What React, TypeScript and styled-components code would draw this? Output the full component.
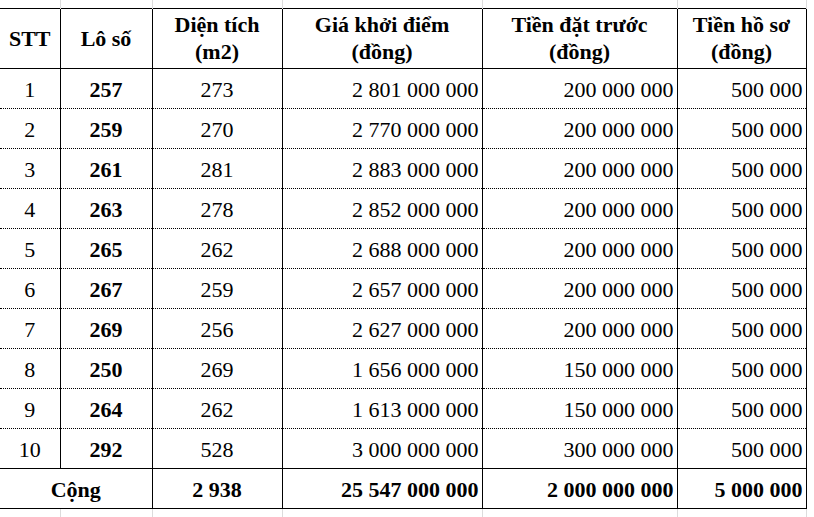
import React from 'react'
import styled, { createGlobalStyle } from 'styled-components'

const GlobalStyle = createGlobalStyle`
  html, body {
    margin: 0;
    padding: 0;
    background: #ffffff;
  }
  body {
    font-family: 'Liberation Serif', 'Times New Roman', serif;
    color: #000000;
  }
`

const COLS = [60, 92, 130, 200, 195, 129]

const Sheet = styled.table`
  border-collapse: collapse;
  table-layout: fixed;
  width: 806px;
  font-size: 22px;
  line-height: 27px;
`

const GridRow = styled.tr<{ $h: number }>`
  height: ${(p) => p.$h}px;
`

const GridCell = styled.td`
  padding: 0;
  border-right: 1px solid #dcdcdc;
`

const HeadRow = styled.tr`
  height: 60px;
`

const HeadCell = styled.th`
  padding: 0;
  font-weight: bold;
  text-align: center;
  vertical-align: middle;
  border-top: 1px solid #000;
  border-bottom: 1px solid #000;
  border-right: 1px solid #000;
`

const BodyRow = styled.tr`
  height: 40px;
`

const Cell = styled.td<{ $align?: 'center' | 'right'; $bold?: boolean; $total?: boolean }>`
  padding: 3px ${(p) => (p.$align === 'right' ? '3px' : '0')} 0 0;
  text-align: ${(p) => p.$align || 'center'};
  font-weight: ${(p) => (p.$bold ? 'bold' : 'normal')};
  vertical-align: middle;
  white-space: nowrap;
  border-right: 1px solid #000;
  border-bottom: ${(p) => (p.$total ? '1px solid #000' : '1px dotted #000')};
  border-top: ${(p) => (p.$total ? '1px solid #000' : 'none')};
`

const rows = [
  ['1', '257', '273', '2 801 000 000', '200 000 000', '500 000'],
  ['2', '259', '270', '2 770 000 000', '200 000 000', '500 000'],
  ['3', '261', '281', '2 883 000 000', '200 000 000', '500 000'],
  ['4', '263', '278', '2 852 000 000', '200 000 000', '500 000'],
  ['5', '265', '262', '2 688 000 000', '200 000 000', '500 000'],
  ['6', '267', '259', '2 657 000 000', '200 000 000', '500 000'],
  ['7', '269', '256', '2 627 000 000', '200 000 000', '500 000'],
  ['8', '250', '269', '1 656 000 000', '150 000 000', '500 000'],
  ['9', '264', '262', '1 613 000 000', '150 000 000', '500 000'],
  ['10', '292', '528', '3 000 000 000', '300 000 000', '500 000']
]

function Gridlines({ h }: { h: number }) {
  return (
    <GridRow $h={h}>
      {COLS.map((_, i) => (
        <GridCell key={i} />
      ))}
    </GridRow>
  )
}

export default function App() {
  return (
    <>
      <GlobalStyle />
      <Sheet>
        <colgroup>
          {COLS.map((w, i) => (
            <col key={i} style={{ width: w }} />
          ))}
        </colgroup>
        <tbody>
          <Gridlines h={8} />
          <HeadRow>
            <HeadCell>STT</HeadCell>
            <HeadCell>Lô số</HeadCell>
            <HeadCell>
              Diện tích
              <br />
              (m2)
            </HeadCell>
            <HeadCell>
              Giá khởi điểm
              <br />
              (đồng)
            </HeadCell>
            <HeadCell>
              Tiền đặt trước
              <br />
              (đồng)
            </HeadCell>
            <HeadCell>
              Tiền hồ sơ
              <br />
              (đồng)
            </HeadCell>
          </HeadRow>
          {rows.map((r) => (
            <BodyRow key={r[0]}>
              <Cell>{r[0]}</Cell>
              <Cell $bold>{r[1]}</Cell>
              <Cell>{r[2]}</Cell>
              <Cell $align='right'>{r[3]}</Cell>
              <Cell $align='right'>{r[4]}</Cell>
              <Cell $align='right'>{r[5]}</Cell>
            </BodyRow>
          ))}
          <BodyRow>
            <Cell colSpan={2} $bold $total>
              Cộng
            </Cell>
            <Cell $bold $total>
              2 938
            </Cell>
            <Cell $align='right' $bold $total>
              25 547 000 000
            </Cell>
            <Cell $align='right' $bold $total>
              2 000 000 000
            </Cell>
            <Cell $align='right' $bold $total>
              5 000 000
            </Cell>
          </BodyRow>
          <Gridlines h={9} />
        </tbody>
      </Sheet>
    </>
  )
}
